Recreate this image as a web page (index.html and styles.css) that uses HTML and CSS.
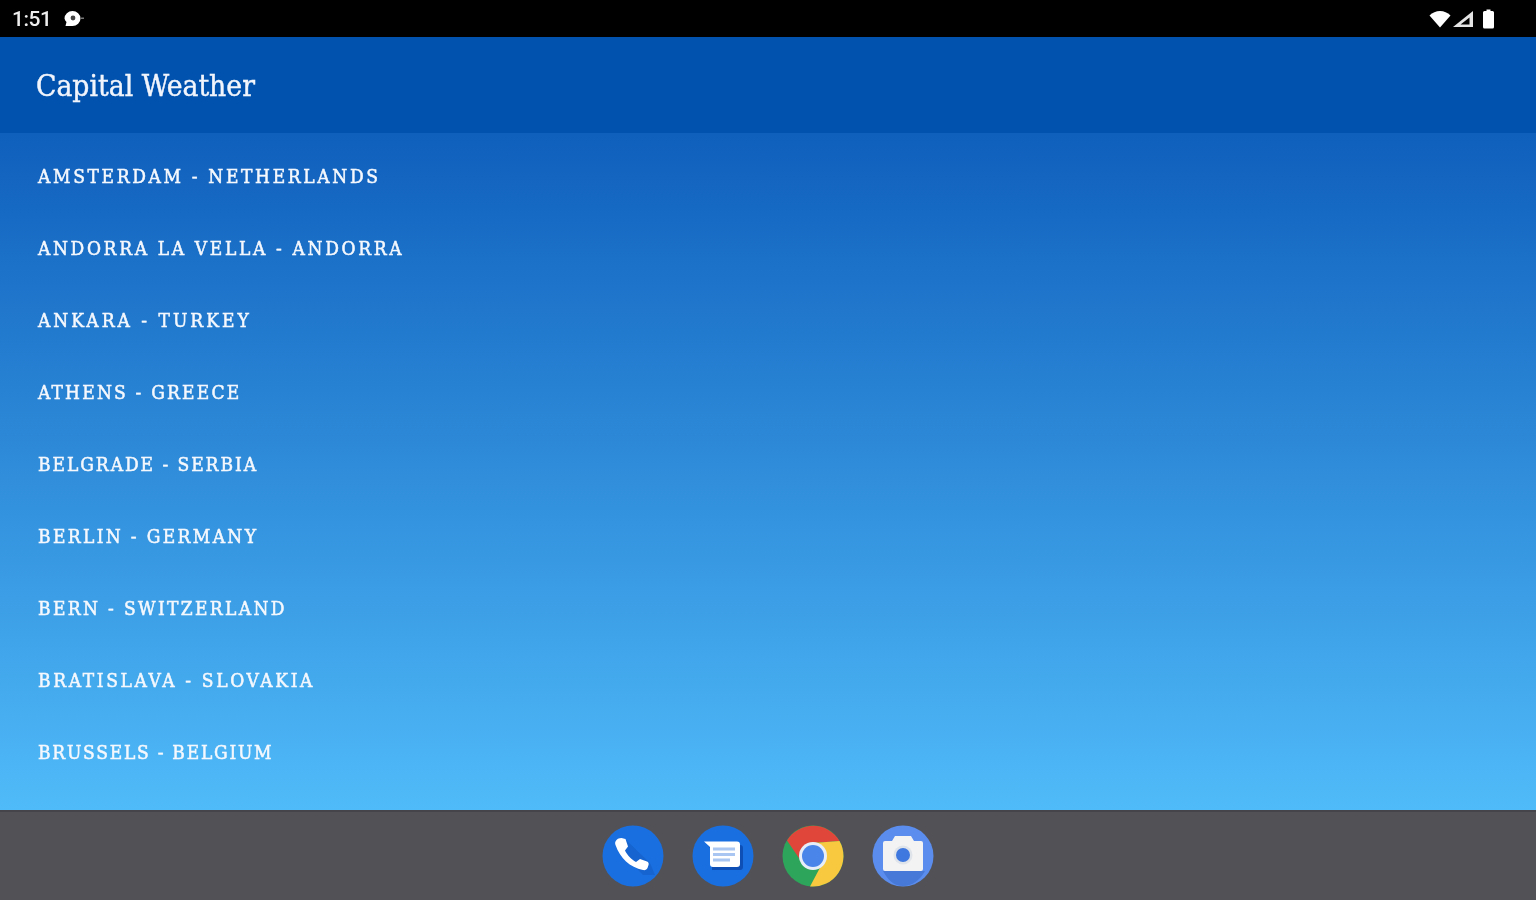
FILE: index.html
```html
<!DOCTYPE html>
<html lang="en">
<head>
<meta charset="utf-8">
<title>Capital Weather</title>
<link rel="stylesheet" href="styles.css">
</head>
<body>
<div class="screen">
  <header class="status">
    <div class="status-left soft">
      <span class="time">1:51</span>
      <svg class="msg" width="22" height="18" viewBox="0 0 22 18"><path fill="#fff" d="M9.500 1a8 7.500 0 0 1 8 7.500a8 7.500 0 0 1-8 7.500h-7l1-4a8 7.500 0 0 1-2-3.500a8 7.500 0 0 1 8-7.500z"/><circle cx="10" cy="8" r="2.400" fill="#444"/><rect x="18" y="7.500" width="3" height="1.500" fill="#777"/></svg>
    </div>
    <div class="status-right soft">
      <svg width="22" height="18" viewBox="0 0 22 18"><path fill="#fff" d="M0.500 5.500Q5 1 11 1T21.500 5.500L11 17.500z"/></svg>
      <svg width="22" height="18" viewBox="0 0 22 18"><path fill="#e4e4e4" d="M20 1V17H0zM16.500 7.500 7.500 14.500H16.500z" fill-rule="evenodd"/></svg>
      <svg class="battery" width="14" height="20" viewBox="0 0 14 20"><path fill="#fff" d="M4.500 0.500h4v1.500h2a1.500 1.500 0 0 1 1.500 1.500V18a1.500 1.500 0 0 1-1.500 1.500h-8A1.500 1.500 0 0 1 1 18V3.500A1.500 1.500 0 0 1 2.500 2h2z"/></svg>
    </div>
  </header>
  <div class="appbar"><h1 class="title soft">Capital Weather</h1></div>
  <main class="content">
    <ul class="list soft">
      <li class="row">AMSTERDAM - NETHERLANDS</li>
      <li class="row">ANDORRA LA VELLA - ANDORRA</li>
      <li class="row row-wide">ANKARA - TURKEY</li>
      <li class="row row-snug">ATHENS - GREECE</li>
      <li class="row row-tight">BELGRADE - SERBIA</li>
      <li class="row row-close">BERLIN - GERMANY</li>
      <li class="row row-close">BERN - SWITZERLAND</li>
      <li class="row">BRATISLAVA - SLOVAKIA</li>
      <li class="row row-tightest">BRUSSELS - BELGIUM</li>
    </ul>
  </main>
  <nav class="dock">
    <svg class="app soft" viewBox="0 0 62 62"><circle cx="31" cy="31" r="30.500" fill="#1a6fe0"/><path fill="#1259bd" d="M14 22 41 50h12L48 38 22 13z" opacity=".5"/><path fill="#fff" d="M13.500 16.500c1-2.500 3.500-3.500 6-3.500l4 1 2.500 7.500-3 4c2 4.500 6.500 9 11 11.500l4-3 7 2.500c1.500 .5 2 2 1.500 3.500l-1 3c-.5 1.500-2.500 2.500-4.500 2-13-2.500-23-12-27.500-25-.5-1.500-.5-2.500 0-3.500z"/></svg>
    <svg class="app soft" viewBox="0 0 62 62"><circle cx="31" cy="31" r="30.500" fill="#1a6fe0"/><path fill="#0d4fb5" d="M16 20h32a3 3 0 0 1 3 3v19a3 3 0 0 1-3 3H20V26z"/><path fill="#fff" d="M12 16.500h33a3 3 0 0 1 3 3V39a3 3 0 0 1-3 3H21a3 3 0 0 1-3-3V22z"/><path fill="#a9c6f2" d="M21 22.500h22v3H21zM21 28h22v3H21zM21 33.500h17v3H21z"/></svg>
    <svg class="app soft" viewBox="0 0 62 62"><circle cx="31" cy="31" r="30.500" fill="#2da55a"/><path fill="#e0463a" d="M5 15.500A30.500 30.500 0 0 1 57.500 16L31 18 21 39z"/><path fill="#f8c93e" d="M57.500 16A30.500 30.500 0 0 1 28 61.400L41 37 31 18z"/><circle cx="31" cy="31" r="14" fill="#e8eef8"/><circle cx="31" cy="31" r="11" fill="#4a86ea"/></svg>
    <svg class="app soft" viewBox="0 0 62 62"><circle cx="31" cy="31" r="30.500" fill="#5a8dee"/><path fill="#4779d8" d="M11 46h42c-5 9-13 15-22 15s-15-6-20-15z"/><path fill="#f3f3f3" d="M23 11h16l3 5h7a2 2 0 0 1 2 2v26a2 2 0 0 1-2 2H13a2 2 0 0 1-2-2V18a2 2 0 0 1 2-2h7z"/><circle cx="31" cy="30" r="9.500" fill="#dfe3ea"/><circle cx="31" cy="30" r="7" fill="#3f78de"/></svg>
  </nav>
</div>
</body>
</html>
```
FILE: styles.css
```css
* { box-sizing: border-box; }
html, body { margin: 0; padding: 0; }
.screen { width: 1536px; height: 900px; display: flex; flex-direction: column; overflow: hidden; font-family: "DejaVu Serif Condensed", "DejaVu Serif", "Liberation Serif", serif; }
.soft { filter: blur(0.6px); }
.status { height: 37px; background: #000; color: #eee; display: flex; justify-content: space-between; align-items: center; padding: 0 40px 0 12px; }
.status-left { display: flex; align-items: center; gap: 12px; padding-top: 1px; }
.time { font: 500 21px/1 Roboto, sans-serif; letter-spacing: -0.5px; }
.status-right { display: flex; align-items: center; gap: 2px; }
.battery { margin-left: 5px; }
.appbar { height: 96px; background: #0152ae; display: flex; align-items: center; padding-left: 36px; }
.title { margin: 0; color: #f2f5fc; font-size: 29.700px; font-weight: 400; -webkit-text-stroke: 0.4px #f2f5fc; }
.content { height: 677px; background: linear-gradient(#0f5fbc, #50bbf9); padding-top: 7px; }
.list { list-style: none; margin: 0; padding: 0; }
.row { height: 72px; display: flex; align-items: center; padding-left: 38px; color: #f5f8fd; font-size: 19px; font-weight: 400; letter-spacing: 2.650px; -webkit-text-stroke: 0.5px #f5f8fd; }
.row-wide { letter-spacing: 3px; }
.row-snug { letter-spacing: 2.200px; }
.row-close { letter-spacing: 2.350px; }
.row-tight { letter-spacing: 1.950px; }
.row-tightest { letter-spacing: 1.750px; }
.dock { height: 90px; background: #525256; border-top: 2px solid #44444a; display: flex; justify-content: center; align-items: center; gap: 28px; padding: 0 1px 0 0; }
.app { width: 62px; height: 62px; }
```
